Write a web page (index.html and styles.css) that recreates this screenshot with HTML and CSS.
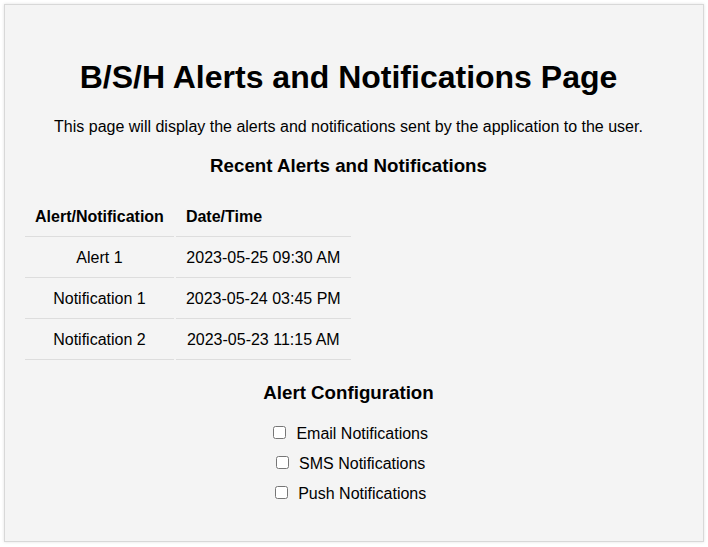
FILE: index.html
```html
<!DOCTYPE html>
<html>
<head>
<meta charset="utf-8">
<title>Alerts and Notifications</title>
<link rel="stylesheet" href="styles.css">
</head>
<body>
<div class="container">
  <h1 class="title">B/S/H Alerts and Notifications Page</h1>
  <p class="intro">This page will display the alerts and notifications sent by the application to the user.</p>
  <h2 class="section-title">Recent Alerts and Notifications</h2>
  <table class="alerts">
    <thead>
      <tr><th>Alert/Notification</th><th>Date/Time</th></tr>
    </thead>
    <tbody>
      <tr><td>Alert 1</td><td>2023-05-25 09:30 AM</td></tr>
      <tr><td>Notification 1</td><td>2023-05-24 03:45 PM</td></tr>
      <tr><td>Notification 2</td><td>2023-05-23 11:15 AM</td></tr>
    </tbody>
  </table>
  <h2 class="section-title config-title">Alert Configuration</h2>
  <div class="options">
    <label class="option"><input type="checkbox"> Email Notifications</label>
    <label class="option"><input type="checkbox"> SMS Notifications</label>
    <label class="option"><input type="checkbox"> Push Notifications</label>
  </div>
</div>
</body>
</html>
```

FILE: styles.css
```css
html, body {
  margin: 0;
  padding: 0;
  background: #ffffff;
}
body {
  padding: 4px;
  font-family: "Liberation Sans", Arial, sans-serif;
  color: #000;
}
.container {
  height: 538px;
  box-sizing: border-box;
  background: #f4f4f4;
  border: 1px solid #d8d8d8;
  box-shadow: 0 0 3px rgba(0,0,0,0.12);
  padding: 20px 29px 18px 18px;
  text-align: center;
}
.title {
  font-size: 32px;
  margin: 34px 0 0;
}
.intro {
  font-size: 16px;
  margin: 22px 0 0;
}
.section-title {
  font-size: 18.72px;
  margin: 19px 0 0;
}
.alerts {
  margin-top: 19px;
  border-spacing: 2px;
  font-size: 16px;
}
.alerts th, .alerts td {
  padding: 10px;
  border-bottom: 1px solid #dddddd;
}
.alerts th {
  text-align: left;
}
.alerts td {
  text-align: center;
}
.config-title {
  margin-top: 20px;
}
.options {
  margin-top: 19px;
  display: flex;
  flex-direction: column;
  align-items: center;
  gap: 10px;
  font-size: 16px;
}
.option {
  display: block;
}
.option input {
  margin: 3px 6px 3px 4px;
}
```
